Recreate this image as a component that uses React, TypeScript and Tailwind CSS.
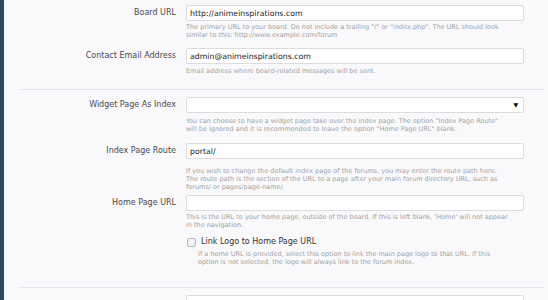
import { ChangeEvent, useState } from "react";

const font = "font-['DejaVu_Sans',sans-serif]";

function Help({
  children,
  indent,
  className = "mt-[2px]",
}: {
  children: React.ReactNode;
  indent?: boolean;
  className?: string;
}) {
  return (
    <p className={`text-[6.5px] leading-[8px] text-[#a2a2a4] ${indent ? "pl-[12px]" : ""} ${className}`}>
      {children}
    </p>
  );
}

function Row({
  label,
  children,
  className = "",
}: {
  label?: string;
  children: React.ReactNode;
  className?: string;
}) {
  return (
    <div className={`flex ${className}`}>
      <div className="w-[172px] shrink-0 pt-[3px] text-right text-[8px] leading-[10px] text-[#48484c]">
        {label}
      </div>
      <div className="ml-[10px] w-[338px]">{children}</div>
    </div>
  );
}

function TextBox({ value, onChange }: { value: string; onChange: (v: string) => void }) {
  return (
    <input
      value={value}
      onChange={(e: ChangeEvent<HTMLInputElement>) => onChange(e.target.value)}
      className="block h-[16px] w-full rounded-[2px] border border-[#dcdcdf] bg-white px-[3px] text-[7.8px] text-[#222] outline-none"
    />
  );
}

export default function App() {
  const [boardUrl, setBoardUrl] = useState("http://animeinspirations.com");
  const [email, setEmail] = useState("admin@animeinspirations.com");
  const [route, setRoute] = useState("portal/");
  const [homeUrl, setHomeUrl] = useState("");
  const [linkLogo, setLinkLogo] = useState(false);

  return (
    <div className={`flex h-[300px] w-[548px] overflow-hidden bg-[#f9f9fb] ${font}`}>
      <div className="w-[4px] shrink-0 bg-[#2c4a60]" />
      <div className="flex-1 pt-[5px]">
        <Row label="Board URL">
          <TextBox value={boardUrl} onChange={setBoardUrl} />
          <Help>
            The primary URL to your board. Do not include a trailing "/" or "index.php". The URL should look
            <br />
            similar to this: http://www.example.com/forum
          </Help>
        </Row>

        <Row label="Contact Email Address" className="mt-[9px]">
          <TextBox value={email} onChange={setEmail} />
          <Help className="mt-[3px]">Email address where board-related messages will be sent.</Help>
        </Row>

        {/* section divider */}
        <div className="ml-[16px] mr-[4px] mt-[14px] border-t border-[#e6e6ea]" />

        <Row label="Widget Page As Index" className="mt-[7px]">
          <div className="flex h-[16px] w-full items-center justify-end rounded-[2px] border border-[#dcdcdf] bg-white pr-[5px]">
            <span className="text-[6px] leading-none text-black">▼</span>
          </div>
          <Help className="mt-[4px]">
            You can choose to have a widget page take over the index page. The option "Index Page Route"
            <br />
            will be ignored and it is recommended to leave the option "Home Page URL" blank.
          </Help>
        </Row>

        <Row label="Index Page Route" className="mt-[10px]">
          <TextBox value={route} onChange={setRoute} />
          <Help className="mt-[8px]">
            If you wish to change the default index page of the forums, you may enter the route path here.
            <br />
            The route path is the section of the URL to a page after your main forum directory URL, such as
            <br />
            forums/ or pages/page-name/.
          </Help>
        </Row>

        <Row label="Home Page URL" className="mt-[4px]">
          <TextBox value={homeUrl} onChange={setHomeUrl} />
          <Help>
            This is the URL to your home page, outside of the board. If this is left blank, 'Home' will not appear
            <br />
            in the navigation.
          </Help>
        </Row>

        <Row className="mt-[8px]">
          <label className="flex items-center gap-[5px] text-[8px] leading-[10px] text-[#333]">
            <input
              type="checkbox"
              checked={linkLogo}
              onChange={() => setLinkLogo(!linkLogo)}
              className="ml-[1px] h-[9px] w-[9px] appearance-none rounded-[2px] border border-[#b8b8bc] bg-[#f1f1f3]"
            />
            Link Logo to Home Page URL
          </label>
          <Help indent className="mt-[3px]">
            If a home URL is provided, select this option to link the main page logo to that URL. If this
            <br />
            option is not selected, the logo will always link to the forum index.
          </Help>
        </Row>

        <div className="ml-[14px] mr-[4px] mt-[21px] border-t border-[#e6e6ea]" />

        <Row className="mt-[7px]">
          <div className="h-[16px] w-full rounded-[2px] border border-[#dcdcdf] bg-white" />
        </Row>
      </div>
    </div>
  );
}
